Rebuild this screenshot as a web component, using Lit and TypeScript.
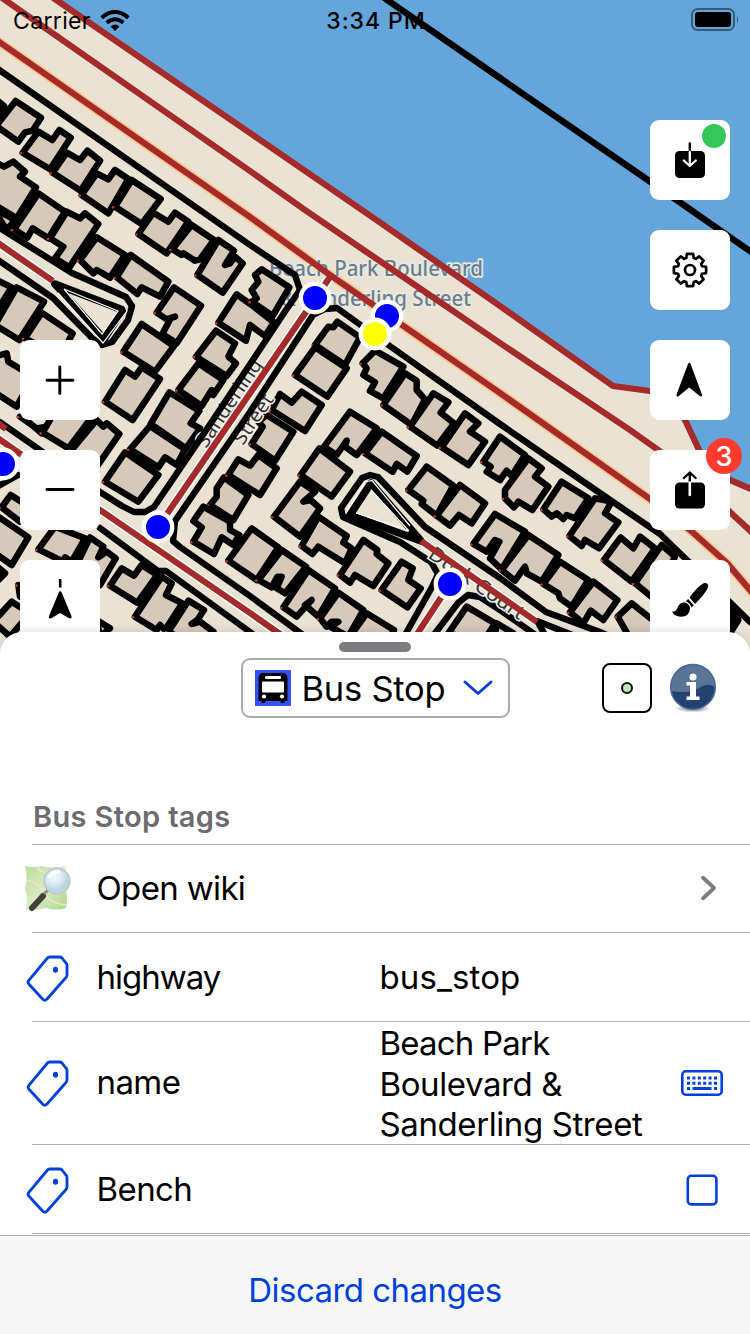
import { LitElement, html, css, svg } from "lit";
import { customElement } from "lit/decorators.js";

interface Tile {
  x: number;
  y: number;
  shapes: string[];
}

// Building footprints, grouped in survey tiles with three units per pixel.
const TILES: Tile[] = [
  {
    x: 0, y: 0,
    shapes: [
      "-10,300 12,318 -12,350",
      "47,303 123,353 98,392 75,397 55,425 -12,378",
      "115,395 157,420 178,390 212,413 150,508 68,458",
      "200,458 240,480 262,452 300,482 242,572 158,518",
      "290,520 325,538 345,510 385,537 325,640 245,585",
      "395,540 482,597 425,672 345,620",
      "-12,488 12,500 40,485 75,515 60,530 108,562 50,655 -40,600",
    ],
  },
  {
    x: 0, y: 210,
    shapes: [
      "-30,-20 0,5 45,30 20,60",
      "115,-50 195,5 145,85 98,55 82,83 42,58",
      "200,5 240,25 255,10 295,42 208,172 165,145 190,110 150,85",
      "290,82 375,135 330,203 290,180 280,190 240,150",
      "392,135 505,215 480,260 425,232 412,252 350,202",
      "460,8 505,35 525,8 565,35 500,130 415,72",
      "575,45 642,90 600,148 585,152 550,130 545,135 517,118",
      "655,90 702,122 675,165 690,160 705,140 728,160 668,248 592,195",
      "522,232 603,287 530,400 487,372 512,325 525,320 500,328 470,308",
      "425,342 522,408 465,485 370,425",
      "375,480 405,500 425,472 480,507 398,630 315,575",
      "710,253 755,285 822,337 795,378 750,345 738,392 655,338",
      "648,362 705,400 685,440 708,460 680,498 588,440",
      "595,460 670,510 640,555 635,540 605,588 535,540",
      "508,547 598,603 572,640 600,655 558,715 452,642",
      "-20,205 35,232 -20,320",
      "50,232 132,275 58,390 -15,345",
      "125,308 218,370 180,440 75,385",
      "-20,440 20,430 25,455 100,500 50,590 -20,545",
    ],
  },
  {
    x: 250, y: 210,
    shapes: [
      "35,178 118,232 68,318 5,275 20,265 5,240 25,215 15,195",
      "262,335 330,382 285,465 195,405 235,350 250,352",
      "195,412 290,475 232,560 135,495",
      "155,545 215,585 165,663 65,600 90,552 125,578",
      "375,422 460,470 400,565 360,543 375,517 340,495 350,475 338,460",
      "465,490 500,512 500,540 525,568 485,645 400,585",
      "550,550 595,577 572,608 612,640 562,707 480,650",
    ],
  },
  {
    x: 0, y: 420,
    shapes: [
      "60,-10 110,25 140,20 125,40 90,10",
      "190,-70 280,-15 205,85 128,38",
      "290,0 310,20 320,10 358,42 270,170 215,90",
      "375,97 475,165 415,245 315,185",
      "450,18 555,88 530,135 495,112 475,142 390,88",
      "672,172 745,225 700,300 630,255 650,230 650,205",
      "610,260 690,305 690,330 718,345 700,375 665,352 642,402 580,365 605,322 580,303",
      "755,325 835,382 770,480 685,422",
      "32,225 95,265 60,305 5,262",
      "-20,280 85,352 35,435 -15,400",
      "-20,430 15,460 -15,490",
      "165,320 255,355 215,425 195,412 190,425 115,388",
      "270,352 310,380 295,412 320,395 347,415 300,495 225,445",
      "365,445 402,467 425,435 472,465 412,548 330,497",
      "485,470 515,490 498,525 547,550 495,630 480,615 470,630 405,590",
      "565,542 612,570 592,600 575,612 600,605 640,635 600,690 505,635",
      "55,495 70,505 60,530",
      "35,545 90,580 30,650 -20,605",
      "290,600 330,625 300,650",
    ],
  },
  {
    x: 250, y: 420,
    shapes: [
      "50,-15 130,35 75,122 5,72 38,20 25,5",
      "25,105 80,145 30,225 -65,165 -35,118 0,137",
      "300,-25 380,25 320,105 285,80 290,62 260,105 222,80",
      "395,35 500,108 472,155 440,132 428,155 345,100",
      "208,85 300,155 245,230 152,165",
      "150,185 195,215 160,245 182,240 210,265 150,350 72,290",
      "205,290 290,348 280,368 305,385 285,430 205,380 187,402 155,378",
      "340,360 382,390 380,402 415,430 370,498 315,465 300,488 270,465",
      "455,425 488,445 475,480 512,505 472,562 395,510",
      "95,390 168,440 105,520 80,505 95,470 82,470 65,502 25,480",
      "175,450 255,505 205,590 165,555 185,540 140,590 100,562",
      "265,518 340,570 295,650 240,620 265,605 245,605 230,620 210,595",
      "350,580 432,630 400,690 300,650",
      "530,140 610,197 560,287 515,252 520,242 475,210",
      "630,195 705,250 665,310 627,285 600,317 560,287",
      "645,-20 685,10 660,35 705,65 655,135 575,82",
      "650,560 735,610 700,665 595,640",
    ],
  },
  {
    x: 500, y: 420,
    shapes: [
      "0,50 75,105 35,168 20,152 0,180 -40,155 -28,140 -50,125",
      "85,115 125,145 105,170 145,200 97,270 55,245 42,262 15,235 15,210",
      "185,185 265,235 225,295 200,285 190,297 170,280 155,290 130,268",
      "285,235 335,245 315,280 355,307 297,385 255,360 245,378 208,348",
      "362,352 400,385 420,350 465,385 395,485 312,420",
      "485,375 525,410 460,535 405,490",
      "-15,282 75,335 5,448 -30,415 -2,365 -15,360 -40,395 -80,372",
      "85,345 175,405 125,485 80,460 75,440 45,482 5,450",
      "180,425 265,480 215,560 180,535 175,520 130,492",
      "280,485 352,540 310,600 272,572 250,610 210,577",
      "395,550 470,610 500,700 410,690 353,590",
      "700,560 715,600 690,640",
      "-10,610 40,640 -20,680",
    ],
  },
];

const leftmost = (shape: string) =>
  shape
    .split(" ")
    .map((p) => p.split(",").map(Number))
    .reduce((a, b) => (b[0] < a[0] ? b : a));

const NODES = [
  [3, 464, "blue"], [158, 527, "blue"], [450, 584, "blue"],
  [315, 298, "blue"], [387, 316, "blue"], [375, 334, "yellow"],
] as const;

const COAST = "49,-5 250,133 375,219 500,306 613,386 650,391 671,395 686,422 700,452 730,480 760,493";
const BOULEVARD = "-5,39 250,217 330,275 500,393 650,499 690,530 727,563 755,596";

@customElement("street-map")
export class StreetMap extends LitElement {
  static styles = css`
    :host { display: block; }
    svg { display: block; font-family: "Noto Sans", sans-serif; }
    .land { fill: #eae3d4; }
    .water { fill: #64a6dc; }
    .bld { fill: #d7c9ba; stroke: #000; stroke-width: 19.5; stroke-linejoin: round; }
    .edge { fill: none; stroke: #000; stroke-width: 6.4; stroke-linejoin: round; stroke-linecap: round; }
    .tri { fill: none; stroke: #000; stroke-width: 7.6; stroke-linejoin: round; }
    .way { fill: none; stroke: #a52a2a; stroke-width: 6.3; stroke-linejoin: round; }
    .casing { fill: none; stroke: #fff; stroke-width: 9.4; stroke-linejoin: round; }
    .trunk { fill: none; stroke: #fac88f; stroke-width: 9.6; }
    .thin { stroke: #fff; stroke-width: 1.2; fill: none; }
    .dot { fill: #c4363c; }
    .label { fill: #6b7f8b; stroke: #e9e8e2; stroke-width: 3.5; paint-order: stroke; stroke-linejoin: round; font-weight: 500; }
    .street { fill: #333; stroke: #f4f1ea; stroke-width: 3; paint-order: stroke; }
    .blue { fill: #0000ff; stroke: #fff; stroke-width: 4.4; }
    .yellow { fill: #ffff00; stroke: #fff; stroke-width: 4.4; }
  `;

  render() {
    return html`<svg width="750" height="664" viewBox="0 0 750 664">
      <rect class="land" width="750" height="664"></rect>
      <polygon class="water" points="${COAST} 760,-5"></polygon>
      <polyline class="trunk" points=${BOULEVARD}></polyline>
      <polyline class="casing" points="-5,241 53,281"></polyline>
      <polyline class="casing" points="-5,436 100,510 250,613 320,662"></polyline>
      <polyline class="casing" points="330,277 158,527"></polyline>
      <polyline class="casing" points="421,541 537,622 600,650"></polyline>
      <polyline class="casing" points="450,584 400,660"></polyline>
      <g class="labels">
        <text class="label" x="269" y="276" font-size="22" textLength="214" lengthAdjust="spacingAndGlyphs">Beach Park Boulevard</text>
        <text class="label" x="281" y="306" font-size="22" textLength="190" lengthAdjust="spacingAndGlyphs">&amp; Sanderling Street</text>
        <circle cx="370" cy="346" r="3.5" fill="#fff"></circle>
        <circle cx="381" cy="346" r="3.5" fill="#fff"></circle>
      </g>
      ${TILES.map(
        (t) => svg`<g transform="translate(${t.x} ${t.y}) scale(0.33333)">
          ${t.shapes.map((s) => {
            const [cx, cy] = leftmost(s);
            return svg`<polygon class="bld" points=${s}></polygon>
              <circle class="dot" cx=${cx - 6} cy=${cy + 2} r="4"></circle>`;
          })}
        </g>`
      )}
      <text class="street" transform="translate(206 449) rotate(-56)" font-size="19.5" textLength="102" lengthAdjust="spacingAndGlyphs">Sanderling</text>
      <text class="street" transform="translate(243 446) rotate(-56)" font-size="19.5" textLength="56" lengthAdjust="spacingAndGlyphs">Street</text>
      <polyline class="edge" points="-5,67 250,245 295,275 300,290 286,310 213,420 154,507 145,512 134,512 122,506 100,492 0,422"></polyline>
      <polyline class="edge" points="-5,225 72,273 126,297 132,306 128,320 112,342 102,345 92,338 53,298 -5,258"></polyline>
      <polygon class="tri" points="55,284 123,310 104,339"></polygon>
      <polyline class="thin" points="64,289 102,334 118,311 64,289"></polyline>
      <polyline class="thin" points="58,293 103,343 127,311 124,304"></polyline>
      <polyline class="edge" points="750,622 690,563 660,534 597,491 500,424 387,344 337,308 325,309 313,315 250,412 175,521 173,541 180,547 250,596 310,640"></polyline>
      <polyline class="edge" points="100,528 158,571 166,571 250,632 285,660"></polyline>
      <polyline class="edge" points="-5,488 18,475"></polyline>
      <polyline class="edge" points="405,635 432,587 438,574 431,562 400,542 343,517 341,508 362,478 370,475 378,477 425,527 500,578 546,612 600,632 660,660"></polyline>
      <polygon class="tri" points="371,483 350,515 421,541"></polygon>
      <polyline class="thin" points="346,513 365,482 372,480.5 410,526"></polyline>
      <polyline class="thin" points="356,513 409,531 371,490"></polyline>
      <polyline class="edge" points="430,640 458,603 468,595 480,597 500,610 540,638"></polyline>
      <polyline class="edge" points="548,640 537,621 585,640"></polyline>
      <text class="street" transform="translate(427 557) rotate(34.500)" font-size="20" textLength="112" lengthAdjust="spacingAndGlyphs">Duck Court</text>

      <polyline class="way" points="-5,-7 5,0 250,171 305,210 500,343 630,430 661,452 730,512 760,540"></polyline>
      <polyline class="way" points=${BOULEVARD}></polyline>
      <polyline class="way" points=${COAST}></polyline>
      <polyline class="way" points="-5,241 53,281"></polyline>
      <polyline class="way" points="-5,421 6,429"></polyline>
      <polyline class="way" points="-5,436 100,510 250,613 320,662"></polyline>
      <polyline class="way" points="330,277 158,527"></polyline>
      <polyline class="way" points="421,541 537,622"></polyline>
      <polyline class="way" points="450,584 400,660"></polyline>
      <polyline class="edge" points="380,-5 500,78 650,181.500 760,258"></polyline>
      ${NODES.map(([x, y, c]) => svg`<circle class=${c} cx=${x} cy=${y} r="14.200"></circle>`)}
    </svg>`;
  }
}

const gearPath = (() => {
  const pts: string[] = [];
  for (let i = 0; i < 8; i++) {
    const a = (i * Math.PI) / 4 - Math.PI / 2;
    for (const [r, d] of [[12.6, -0.3], [16.4, -0.19], [16.4, 0.19], [12.6, 0.3]]) {
      pts.push(`${(20 + r * Math.cos(a + d)).toFixed(2)},${(20 + r * Math.sin(a + d)).toFixed(2)}`);
    }
  }
  return pts.join(" ");
})();

const ICONS = {
  download: svg`<rect x="5" y="11" width="30" height="27" rx="4.5"></rect><path d="M19.8 3.5V12" stroke="#000" stroke-width="2.4" stroke-linecap="round"></path><path d="M19.8 12V25.5M13.8 20.5L19.8 26L25.8 20.5" fill="none" stroke="#fff" stroke-width="2.3" stroke-linecap="round" stroke-linejoin="round"></path>`,
  gear: svg`<g fill="none" stroke="#000" stroke-width="2.7" stroke-linejoin="round"><polygon points=${gearPath}></polygon><circle cx="20" cy="20" r="5"></circle></g>`,
  arrow: svg`<path d="M18 4Q19.3 1.5 20.6 4L32 34.5Q32.3 37.5 29.7 36L19.2 27.5L8.800 36Q6.200 37.5 6.500 34.5Z"></path>`,
  share: svg`<rect x="5" y="12.5" width="30" height="26" rx="4.5"></rect><path d="M19.8 14V3M14 8L19.8 2.5L25.6 8" fill="none" stroke="#000" stroke-width="2.4" stroke-linecap="round" stroke-linejoin="round"></path><path d="M19.8 12.5V25" stroke="#fff" stroke-width="2.6" stroke-linecap="round"></path>`,
  brush: svg`<path d="M33.5 3.2Q39 2.5 38 7.5Q35 14 25 24L19.5 17.5Q27 7 33.5 3.2Z"></path><path d="M18.2 19L23.8 25.2L21.3 27.5Q20 22.5 15.7 21.2Z"></path><path d="M14.5 22.3Q20 24 20 28.5Q19.5 36.5 11 36.8Q4 36.5 2 31.5Q6 32 7 29Q9 22.5 14.5 22.3Z"></path>`,
  plus: svg`<path d="M7 20.2H33M19.8 7V33.5" stroke="#000" stroke-width="2.9" stroke-linecap="round"></path>`,
  minus: svg`<path d="M7 19.5H33" stroke="#000" stroke-width="2.9" stroke-linecap="round"></path>`,
  north: svg`<path d="M20.2 -1V7.5" stroke="#000" stroke-width="2.6"></path><path d="M18.8 12.5Q20.2 9.5 21.6 12.5L31.5 36Q32 39.5 29 38.3L20.2 33L11.4 38.3Q8.4 39.5 9 36Z"></path>`,
};

@customElement("map-button")
export class MapButton extends LitElement {
  static properties = { icon: {}, badge: {} };
  declare icon: keyof typeof ICONS;
  declare badge: string;
  static styles = css`
    :host { display: grid; place-items: center; width: 80px; height: 80px; border-radius: 9px; background: #fff; position: relative; }
    svg { display: block; overflow: visible; }
    .online { position: absolute; top: 4px; right: 4px; width: 24px; height: 24px; border-radius: 50%; background: #34c759; }
    .count { position: absolute; top: -12px; right: -12px; width: 36px; height: 36px; border-radius: 50%; background: #ff3b30; color: #fff; font: 500 27px/37px Inter, sans-serif; text-align: center; }
  `;
  render() {
    return html`<svg width="40" height="40" viewBox="0 0 40 40">${ICONS[this.icon]}</svg>
      ${this.badge === "online" ? html`<span class="online"></span>` : this.badge ? html`<span class="count">${this.badge}</span>` : ""}`;
  }
}

const tagIcon = html`<svg width="44" height="48" viewBox="0 0 44 48" fill="none">
  <path d="M23.5 2H33.5Q35 2 36 3L40.2 8.3Q41 9.2 41 10.5V20Q41 21.3 40 22.5L20.8 44.3Q18.8 46.2 16.8 44.3L3 29.3Q1.2 27.2 3 25.2L21.5 3Q22.3 2 23.5 2Z" stroke="#0040dd" stroke-width="2.8" stroke-linejoin="round"></path>
  <ellipse cx="29.5" cy="14.8" rx="2.6" ry="3" fill="#0040dd"></ellipse></svg>`;

const wikiIcon = html`<svg width="50" height="52" viewBox="0 0 50 52">
  <defs>
    <radialGradient id="lens" cx=".4" cy=".35"><stop offset="0" stop-color="#f8fcff"></stop><stop offset=".65" stop-color="#d5e8f2"></stop><stop offset="1" stop-color="#bdd6df"></stop></radialGradient>
    <linearGradient id="land" x2="1" y2="1"><stop offset="0" stop-color="#b5dda0"></stop><stop offset=".5" stop-color="#dbecc2"></stop><stop offset="1" stop-color="#a9d68e"></stop></linearGradient>
  </defs>
  <path d="M3 3Q12 5 20 3Q32 6 43 3Q46 18 44 27Q46 36 44 45Q33 48 24 45Q14 48 4 46Q6 34 3 26Q6 14 3 3Z" fill="url(#land)"></path>
  <path d="M4 18Q14 16 20 28T44 42M16 4Q18 12 30 8" stroke="#efe5c8" stroke-width="1.5" fill="none"></path>
  <path d="M21 33L10 45" stroke="#45403b" stroke-width="6" stroke-linecap="round"></path>
  <path d="M26 27L22 31" stroke="#8d9094" stroke-width="3"></path>
  <circle cx="35" cy="18" r="12.8" fill="url(#lens)" stroke="#b9c9c8" stroke-width="1.6"></circle>
  <path d="M27 15Q30 8 38 9" stroke="#fff" stroke-width="3" fill="none"></path></svg>`;

const chevron = html`<svg width="18" height="26" viewBox="0 0 18 26"><path d="M3 2.7L14 13L3 23.3" fill="none" stroke="#7c7c80" stroke-width="3.8" stroke-linecap="round" stroke-linejoin="round"></path></svg>`;

const keyboard = html`<svg width="42" height="26" viewBox="0 0 42 26"><rect x="1.3" y="1.3" width="39.4" height="23.4" rx="3.5" fill="none" stroke="#0040dd" stroke-width="2.6"></rect>
  <path d="M6 8H37M6 13.2H37" stroke="#0040dd" stroke-width="3" stroke-dasharray="3 2.400"></path><path d="M6 18.5H9M11.5 18.5H30.5M33 18.5H36" stroke="#0040dd" stroke-width="2.8"></path></svg>`;

const checkbox = html`<svg width="32" height="32" viewBox="0 0 32 32"><rect x="1.8" y="1.8" width="28.6" height="28.6" rx="3.5" fill="none" stroke="#0040dd" stroke-width="2.6"></rect></svg>`;

@customElement("app-root")
export class AppRoot extends LitElement {
  static styles = css`
    :host { display: block; width: 750px; height: 1334px; overflow: hidden; position: relative; background: #fff; color: #000; font-family: Inter, sans-serif; }
    svg { display: block; }
    .screen { display: flex; flex-direction: column; height: 1334px; }
    .map { height: 664px; flex: none; position: relative; overflow: hidden; }
    .status { position: absolute; inset: 0 0 auto 0; height: 40px; display: grid; grid-template-columns: 1fr auto 1fr; align-items: center; padding: 0 11px 0 13px; box-sizing: border-box; font-size: 23px; }
    .carrier { display: flex; align-items: center; gap: 9px; letter-spacing: 0.35px; padding-top: 1px; }
    .clock { font-weight: 500; letter-spacing: 0.95px; padding-top: 2px; }
    .battery { justify-self: end; }
    .tools { position: absolute; display: flex; flex-direction: column; gap: 30px; }
    .left { left: 20px; top: 340px; }
    .right { right: 20px; top: 120px; }
    .sheet { position: relative; margin-top: -32px; flex: 1; display: flex; flex-direction: column; background: #fff; border-radius: 22px 22px 0 0; box-shadow: 0 -1px 8px rgba(0, 0, 0, 0.12); }
    .grabber { width: 72px; height: 10px; margin: 10px auto 0; border-radius: 5px; background: #7c7c80; }
    .head { display: grid; grid-template-columns: 1fr 269px 1fr; align-items: center; height: 60px; margin-top: 6px; padding-left: 1px; }
    .picker { grid-column: 2; box-sizing: border-box; height: 60px; border: 2px solid #aaaaac; border-radius: 9px; display: flex; align-items: center; padding-left: 12px; font-size: 34.5px; white-space: nowrap; }
    .name { margin-left: 10.5px; letter-spacing: -0.25px; width: 149.5px; }
    .caret { margin-left: 12px; }
    .actions { display: flex; align-items: center; justify-content: flex-end; gap: 17px; padding-right: 33px; }
    .geom { box-sizing: border-box; width: 50px; height: 50px; border: 2px solid #000; border-radius: 8px; display: grid; place-items: center; }
    .title { height: 126px; box-sizing: border-box; padding: 83px 0 0 33px; font-weight: 600; font-size: 29px; line-height: 32px; color: #6c6c70; letter-spacing: 0.35px; }
    .row { box-sizing: border-box; height: 89px; margin-left: 32px; border-top: 1px solid #b3b3b7; display: grid; grid-template-columns: 64.5px 283px 289.5px 1fr; align-items: center; font-size: 33px; line-height: 40.5px; letter-spacing: -0.65px; }
    .row.first { height: 88px; }
    .row.tall { height: 123px; }
    .tag { letter-spacing: -1px; }
    .key { letter-spacing: -0.6px; }
    .tall .key { padding-bottom: 2px; }
    .value { letter-spacing: 0.1px; }
    .text { letter-spacing: -0.4px; padding-top: 1px; }
    .narrow { letter-spacing: -0.8px; }
    .lead { margin-left: -6px; padding-top: 3px; }
    .tall .lead { padding-top: 2px; }
    .wiki { margin-left: -10px; }
    .more { display: grid; justify-items: center; padding-right: 1px; padding-bottom: 1px; }
    .trail { display: grid; justify-items: center; padding: 1px 15px 0 0; }
    .tall .trail { padding-top: 0; }
    .end { margin-left: 32px; border-top: 1px solid #b3b3b7; height: 1px; }
    .bar { flex: 1; border-top: 1px solid #aeaeb0; background: #f7f7f7; display: flex; align-items: center; justify-content: center; padding-top: 9px; box-sizing: border-box; color: #0040dd; font-size: 33px; letter-spacing: -0.55px; }
  `;

  render() {
    return html`<main class="screen">
      <section class="map">
        <street-map></street-map>
        <div class="status">
          <span class="carrier">Carrier
            <svg width="30" height="22" viewBox="0 0 30 22"><g fill="none" stroke="#000" stroke-width="3.9"><path d="M1.6 7.8Q15 -4 28.4 7.8"></path><path d="M6.7 12.8Q15 5.8 23.3 12.8"></path></g><path d="M10.6 16.4Q15 12.6 19.4 16.4L15 21Z"></path></svg>
          </span>
          <span class="clock">3:34 PM</span>
          <svg class="battery" width="48" height="24" viewBox="0 0 48 24"><rect x="1" y="1" width="42" height="21" rx="5.5" fill="none" stroke="#000" stroke-opacity=".45" stroke-width="2"></rect><rect x="4" y="4" width="36" height="15" rx="3"></rect><path d="M46 8Q48 11.5 46 15Z" opacity=".5"></path></svg>
        </div>
        <nav class="tools left">
          <map-button icon="plus"></map-button>
          <map-button icon="minus"></map-button>
          <map-button icon="north"></map-button>
        </nav>
        <nav class="tools right">
          <map-button icon="download" badge="online"></map-button>
          <map-button icon="gear"></map-button>
          <map-button icon="arrow"></map-button>
          <map-button icon="share" badge="3"></map-button>
          <map-button icon="brush"></map-button>
        </nav>
      </section>
      <section class="sheet">
        <div class="grabber"></div>
        <header class="head">
          <div class="picker">
            <svg width="36" height="36" viewBox="0 0 36 36"><rect width="36" height="36" fill="#3350ff"></rect><path d="M8 3H28Q32 3 32.5 8V31H29.5V32.5Q27.5 34 25.5 32.5V31H10.500V32.5Q8.500 34 6.500 32.500V31H3.500V8Q4 3 8 3Z"></path><rect x="10" y="6" width="16" height="3" rx="1" fill="#fff"></rect><rect x="7" y="11.500" width="22" height="11" rx="1" fill="#fff"></rect><circle cx="9" cy="26.500" r="2.100" fill="#fff"></circle><circle cx="27" cy="26.500" r="2.100" fill="#fff"></circle></svg>
            <span class="name">Bus Stop</span>
            <svg class="caret" width="30" height="18" viewBox="0 0 30 18"><path d="M2 3L15 14.500L28 3" fill="none" stroke="#0040dd" stroke-width="2.900" stroke-linecap="round" stroke-linejoin="round"></path></svg>
          </div>
          <div class="actions">
            <span class="geom"><svg width="14" height="14" viewBox="0 0 14 14"><circle cx="7" cy="7" r="5" fill="#bce8bc" stroke="#111" stroke-width="2"></circle></svg></span>
            <svg width="48" height="50" viewBox="0 0 48 50">
              <defs><radialGradient id="shade"><stop offset="0" stop-opacity=".6"></stop><stop offset="1" stop-opacity="0"></stop></radialGradient></defs>
              <ellipse cx="24" cy="45.500" rx="18" ry="4" fill="url(#shade)"></ellipse>
              <circle cx="24" cy="24" r="22.300" fill="#23426f"></circle>
              <path d="M2.500 28A22 22 0 1 1 45.800 24Q39 19 30 25T2.500 28Z" fill="#5a7496"></path>
              <circle cx="24" cy="24" r="22.300" fill="none" stroke="#46699c" stroke-width="1.500"></circle>
              <circle cx="24" cy="14" r="3.500" fill="#fff"></circle><path d="M17.500 19H27V33.500H30.500V37H17.500V33.500H21V22.500H17.500Z" fill="#fff"></path>
            </svg>
          </div>
        </header>
        <div class="title">Bus Stop tags</div>
        <div class="row first"><span class="wiki">${wikiIcon}</span><span>Open wiki</span><span></span><span class="more">${chevron}</span></div>
        <div class="row"><span class="lead">${tagIcon}</span><span class="tag">highway</span><span class="value">bus_stop</span></div>
        <div class="row tall"><span class="lead">${tagIcon}</span><span class="key">name</span><span class="text"><span class="narrow">Beach Park</span><br />Boulevard &amp;<br />Sanderling Street</span><span class="trail">${keyboard}</span></div>
        <div class="row"><span class="lead">${tagIcon}</span><span class="key">Bench</span><span></span><span class="trail">${checkbox}</span></div>
        <div class="end"></div>
        <footer class="bar">Discard changes</footer>
      </section>
    </main>`;
  }
}
